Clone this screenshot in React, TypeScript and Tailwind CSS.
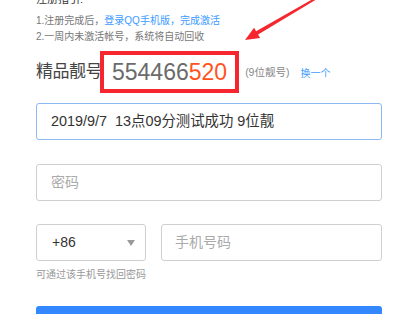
export default function App() {
  return (
    <div
      className="relative w-[418px] h-[314px] overflow-hidden bg-white"
      style={{ fontFamily: '"Liberation Sans", "Noto Sans CJK SC", sans-serif' }}
    >
      <div className="pl-[36px] w-[382px]">
        {/* guide */}
        <div className="-mt-[9px] h-[16px] leading-[16px] text-[11px] text-[#333]">注册指引:</div>
        <div className="mt-[6px] text-[10px] leading-[16px] text-[#777]">
          <div>
            1.注册完成后，<span className="text-[#3d9bff]">登录QQ手机版，完成激活</span>
          </div>
          <div>2.一周内未激活帐号，系统将自动回收</div>
        </div>

        {/* number */}
        <div className="mt-[6px] flex items-center h-[42px]">
          <span className="text-[17px] text-[#444] tracking-[-0.5px]">精品靓号</span>
          <div className="-ml-[2px] h-[42px] border-[4px] border-[#f5262d] px-[8px] flex items-center text-[23px] text-[#6b6b6b]">
            554466<span className="text-[#ff5420]">520</span>
          </div>
          <span className="ml-[6px] mt-[2px] text-[10.5px] text-[#888]">(9位靓号)</span>
          <span className="ml-[11px] mt-[2px] text-[10px] text-[#3d9bff]">换一个</span>
        </div>

        {/* fields */}
        <div className="mt-[10px] h-[37px] rounded-[3px] border border-[#8db9f2] flex items-center px-[14px] text-[14.4px] text-[#333]">
          2019/9/7&nbsp;&nbsp;13点09分测试成功 9位靓
        </div>
        <div className="mt-[24px] h-[37px] rounded-[3px] border border-[#cfcfcf] flex items-center px-[14px] text-[14px] text-[#aaa]">
          密码
        </div>
        <div className="mt-[23px] flex gap-[15px]">
          <div className="w-[110px] h-[37px] rounded-[3px] border border-[#cfcfcf] flex items-center justify-between pl-[15px] pr-[10px] text-[14px] text-[#333]">
            <span>+86</span>
            <svg width="8" height="6" viewBox="0 0 8 6">
              <path d="M0 0 L8 0 L4 6 Z" fill="#9a9a9a" />
            </svg>
          </div>
          <div className="flex-1 h-[37px] rounded-[3px] border border-[#cfcfcf] flex items-center px-[13px] text-[14px] text-[#aaa]">
            手机号码
          </div>
        </div>
        <div className="mt-[6px] text-[10px] leading-[16px] text-[#999]">可通过该手机号找回密码</div>
        <div className="mt-[23px] h-[30px] rounded-[3px] bg-[#3388ff]" />
      </div>

      {/* annotation arrow */}
      <svg className="absolute left-0 top-0" width="418" height="314" viewBox="0 0 418 314">
        <polygon
          points="245,40 254.1,27.7 256.1,31.2 314.5,-1.9 315.5,-0.1 258.1,34.6 260.1,38.1"
          fill="#f5262d"
        />
      </svg>
    </div>
  );
}
